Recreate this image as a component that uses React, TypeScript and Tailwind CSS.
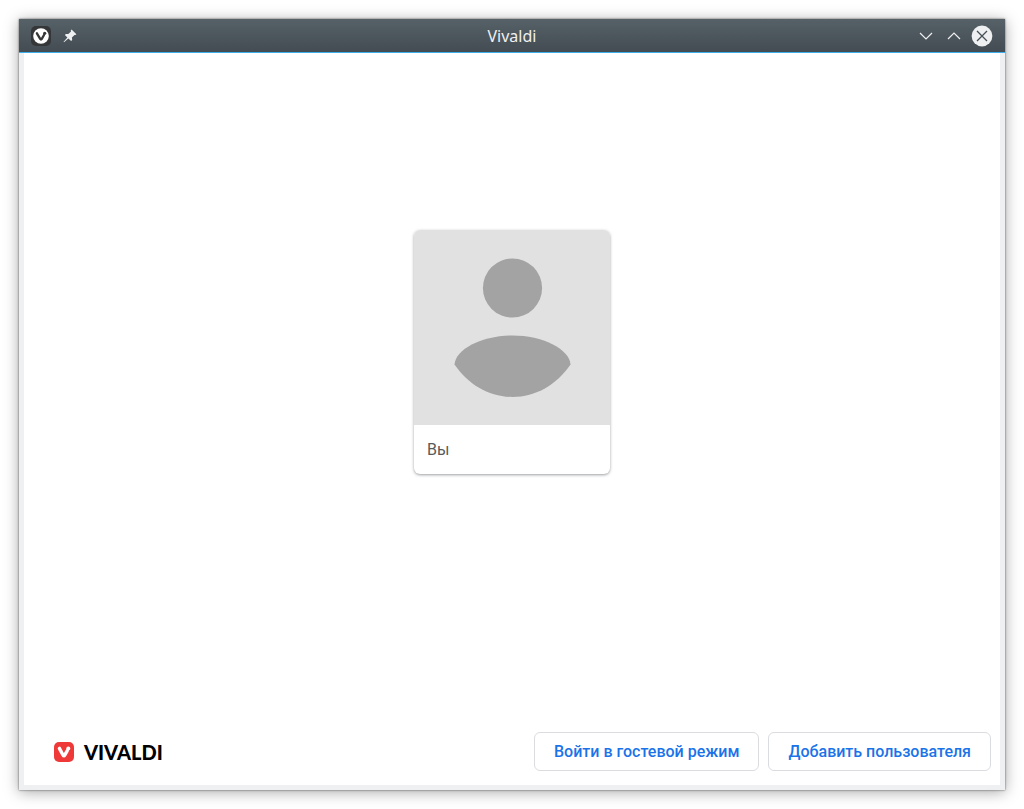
import React from "react";

interface Profile {
  id: number;
  name: string;
}

const profiles: Profile[] = [{ id: 1, name: "Вы" }];

const AppIcon = () => (
  <svg viewBox="0 0 20 20" className="h-5 w-5" aria-hidden="true">
    <rect width="20" height="20" rx="5" fill="#353637" />
    <circle cx="10" cy="10" r="7.8" fill="#fff" />
    <path
      d="M5.9 7.3 L9.2 12.9 Q10 14.1 10.8 12.9 L13 9"
      fill="none"
      stroke="#353637"
      strokeWidth="2.3"
      strokeLinecap="round"
      strokeLinejoin="round"
    />
    <circle cx="13.7" cy="7.3" r="1.6" fill="#353637" />
  </svg>
);

const PinIcon = () => (
  <svg viewBox="0 0 14 14" className="h-3.5 w-3.5" aria-hidden="true">
    <path
      d="M8.6 0.6 L13.4 5.2 L12.4 6.1 L11.5 5.9 L8.9 8.5 L9.2 10.9 L8.1 12 L5.4 9.4 L1 13.2 L0.6 12.8 L4.4 8.5 L1.9 5.9 L2.9 4.9 L5.3 5.1 L8 2.5 L7.7 1.6 Z"
      fill="#eff0f1"
    />
  </svg>
);

const ChevronIcon = ({ up = false }: { up?: boolean }) => (
  <svg viewBox="0 0 14 8" className="h-2 w-3.5" aria-hidden="true">
    <path
      d={up ? "M1 7 L7 1 L13 7" : "M1 1 L7 7 L13 1"}
      fill="none"
      stroke="#eff0f1"
      strokeWidth="1.2"
    />
  </svg>
);

const CloseIcon = () => (
  <svg viewBox="0 0 22 22" className="h-[22px] w-[22px]" aria-hidden="true">
    <circle cx="11" cy="11" r="10.4" fill="#eff0f1" />
    <path d="M6 6 L16 16 M16 6 L6 16" stroke="#475057" strokeWidth="1.3" />
  </svg>
);

const TitleBar = () => (
  <header className="grid h-[34px] shrink-0 grid-cols-3 items-center border-b border-[#3daee9] bg-linear-to-b from-[#566168] to-[#434c52] px-3">
    <div className="flex items-center gap-3">
      <AppIcon />
      <button type="button" aria-label="Закрепить">
        <PinIcon />
      </button>
    </div>
    <h1 className="text-center font-['Noto_Sans',sans-serif] text-base leading-6 text-[#eff0f1]">
      Vivaldi
    </h1>
    <div className="flex items-center justify-end gap-2.5">
      <button type="button" aria-label="Свернуть">
        <ChevronIcon />
      </button>
      <button type="button" aria-label="Развернуть" className="pl-1">
        <ChevronIcon up />
      </button>
      <button type="button" aria-label="Закрыть">
        <CloseIcon />
      </button>
    </div>
  </header>
);

const Avatar = () => (
  <svg viewBox="0 0 196 195" className="block w-full bg-[#e1e1e1]" aria-hidden="true">
    <circle cx="98.5" cy="58" r="29.6" fill="#a3a3a3" />
    <path
      d="M40.5 134.5 C41.5 119 68.5 105.5 98.5 105.5 C128.5 105.5 155.5 119 156.5 134.5 C142.5 155 121.5 167 98.5 167 C75.5 167 54.5 155 40.5 134.5 Z"
      fill="#a3a3a3"
    />
  </svg>
);

const ProfileCard = ({ profile }: { profile: Profile }) => (
  <button
    type="button"
    className="w-[196px] overflow-hidden rounded-md bg-white text-left shadow-[0_1px_3px_rgba(60,64,67,0.5)]"
  >
    <Avatar />
    <span className="block px-[13px] py-3 text-base leading-[25px] text-[#5a5a5a]">
      {profile.name}
    </span>
  </button>
);

const VivaldiLogo = () => (
  <div className="flex items-center gap-2.5">
    <svg viewBox="0 0 20 20" className="h-5 w-5" aria-hidden="true">
      <rect width="20" height="20" rx="5" fill="#ef3939" />
      <path
        d="M5.4 6.4 L9.1 13.2 Q9.9 14.6 10.7 13.2 L13.2 8.8"
        fill="none"
        stroke="#fff"
        strokeWidth="3.4"
        strokeLinecap="round"
        strokeLinejoin="round"
      />
      <circle cx="14.3" cy="6.4" r="2" fill="#fff" />
    </svg>
    <span className="font-[Lato,sans-serif] text-xl leading-5 font-black text-black">
      VIVALDI
    </span>
  </div>
);

const ActionButton = ({ children }: { children: React.ReactNode }) => (
  <button
    type="button"
    className="h-[39px] rounded-md border border-[#dadce0] bg-white px-[19px] text-base font-medium text-[#1a73e8]"
  >
    {children}
  </button>
);

const App: React.FC = () => {
  return (
    <div className="flex min-h-screen flex-col bg-white p-[19px] font-[Roboto,sans-serif]">
      <div className="flex flex-1 flex-col bg-[#eff0f1] shadow-[0_0_2px_rgba(0,0,0,0.6),0_2px_14px_rgba(0,0,0,0.35)]">
        <TitleBar />
        <div className="mx-[5px] mb-[5px] flex flex-1 flex-col bg-white">
          <main className="flex flex-1 flex-wrap content-start justify-center pt-[177px]">
            {profiles.map((profile) => (
              <ProfileCard key={profile.id} profile={profile} />
            ))}
          </main>
          <footer className="flex items-center justify-between pr-[9px] pb-3.5 pl-[30px]">
            <VivaldiLogo />
            <div className="flex gap-[9px]">
              <ActionButton>Войти в гостевой режим</ActionButton>
              <ActionButton>Добавить пользователя</ActionButton>
            </div>
          </footer>
        </div>
      </div>
    </div>
  );
};

export default App;
